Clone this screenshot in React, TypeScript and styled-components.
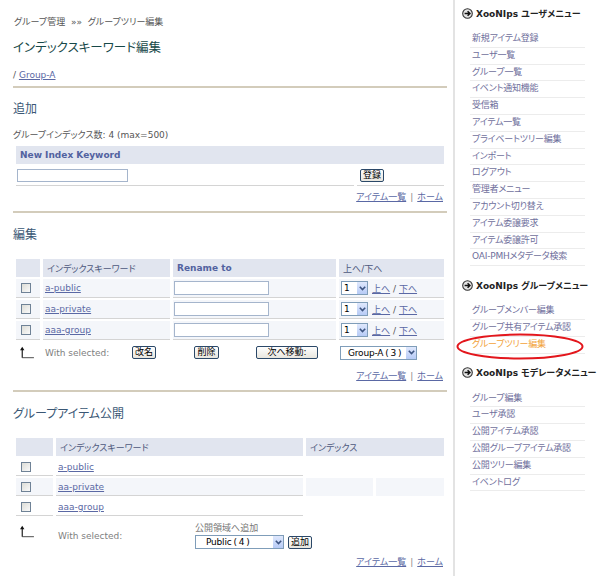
import React from 'react';
import styled, { createGlobalStyle } from 'styled-components';

const FONT = `"DejaVu Sans", "Noto Sans CJK JP", sans-serif`;

const Global = createGlobalStyle`
  html, body { margin: 0; padding: 0; background: #fff; }
  body {
    font-family: ${FONT};
    font-size: 9px;
    color: #555;
    font-feature-settings: "palt";
  }
  * { box-sizing: border-box; }
`;

const Page = styled.div`
  display: flex;
  width: 600px;
  min-height: 576px;
`;

const Main = styled.main`
  width: 453px;
  padding: 15px 6px 0 13px;
`;

const Breadcrumb = styled.div`
  line-height: 14px;
  color: #555;
  padding-left: 1px;
`;

const Title = styled.h1`
  margin: 10px 0 0;
  font-size: 12.5px;
  line-height: 18px;
  font-weight: normal;
  color: #174848;
`;

const PathLine = styled.div`
  margin-top: 11px;
  line-height: 14px;
  color: #555;
`;

const Rule = styled.div<{ mt: number }>`
  height: 2px;
  background: #d3ccbb;
  margin-top: ${p => p.mt}px;
`;

const SectionTitle = styled.h2<{ mt: number }>`
  margin: ${p => p.mt}px 0 0;
  font-size: 12px;
  line-height: 18px;
  font-weight: normal;
  color: #3a5775;
`;

const Note = styled.div`
  margin-top: 10px;
  line-height: 14px;
  color: #555;
`;

const Table = styled.table<{ mt: number }>`
  margin-top: ${p => p.mt}px;
  width: 434px;
  table-layout: fixed;
  border-collapse: separate;
  border-spacing: 3px 2px;
  font-size: 9px;
`;

const Th = styled.th<{ jp?: boolean }>`
  background: #e1e5ef;
  height: 18px;
  padding: 0 4px;
  text-align: left;
  font-weight: ${p => (p.jp ? 'normal' : 'bold')};
  color: ${p => (p.jp ? '#4d587c' : '#5262a0')};
  white-space: nowrap;
  vertical-align: middle;
`;

const Td = styled.td<{ h: number; tint?: boolean; line?: boolean; pl?: number }>`
  height: ${p => p.h}px;
  padding: 0 0 0 ${p => p.pl ?? 0}px;
  background: ${p => (p.tint ? '#f4f6fa' : 'transparent')};
  border-bottom: ${p => (p.line ? '1px solid #d4d4d4' : 'none')};
  vertical-align: middle;
  white-space: nowrap;
`;

const TopTd = styled.td`
  height: 33px;
  padding: 4px 0 0 2px;
  vertical-align: top;
`;

const Cell = styled.div<{ pl?: number; pr?: number; pt?: number }>`
  display: flex;
  align-items: center;
  padding-left: ${p => p.pl ?? 0}px;
  padding-right: ${p => p.pr ?? 0}px;
  padding-top: ${p => p.pt ?? 0}px;
`;

const Link = styled.a`
  color: #5a68a4;
  text-decoration: underline;
  cursor: pointer;
`;

const Grey = styled.span`
  color: #808080;
`;

const Spacer = styled.span`
  flex: 1;
`;

const TextInput = styled.input<{ w: number; h: number }>`
  width: ${p => p.w}px;
  height: ${p => p.h}px;
  border: 1px solid #a5b5cc;
  padding: 0 2px;
  margin: 0;
  font-size: 9px;
  background: #fff;
  display: block;
`;

const Check = styled.input.attrs({ type: 'checkbox' })`
  appearance: none;
  width: 10px;
  height: 10px;
  margin: 0;
  border: 1px solid #6f8296;
  background: linear-gradient(135deg, #dcdcd6, #fafafa);
  display: block;
`;

const Btn = styled.button<{ w: number }>`
  font-family: ${FONT};
  font-size: 9px;
  width: ${p => p.w}px;
  height: 13px;
  padding: 0;
  line-height: 11px;
  border: 1px solid #2b4868;
  border-radius: 2px;
  background: linear-gradient(#fefefe, #e8e6de);
  color: #000;
  cursor: pointer;
  flex: none;
`;

const SelectWrap = styled.span<{ w: number }>`
  display: inline-flex;
  align-items: center;
  width: ${p => p.w}px;
  height: 14px;
  border: 1px solid #7f9db9;
  background: #fff;
  color: #000;
  font-size: 9px;
  flex: none;
`;

const SelectText = styled.span<{ pl: number }>`
  flex: 1;
  min-width: 0;
  padding-left: ${p => p.pl}px;
  line-height: 12px;
  white-space: nowrap;
  letter-spacing: -0.2px;
`;

const Paren = styled.span`
  margin: 0 2px;
`;

const SelectArrow = styled.span`
  width: 11px;
  height: 12px;
  flex: none;
  background: linear-gradient(#dfe8fd, #b7cbf6);
  border-left: 1px solid #fff;
  display: flex;
  align-items: center;
  justify-content: center;
`;

const Links = styled.div<{ mt: number }>`
  margin-top: ${p => p.mt}px;
  line-height: 14px;
  text-align: right;
  padding-right: 4px;
`;

const Sep = styled.span`
  color: #888;
  margin: 0 4px;
`;

const Stack = styled.div`
  display: flex;
  flex-direction: column;
`;

const StackLabel = styled.div`
  line-height: 13px;
  color: #777;
`;

const Row = styled.div<{ gap: number }>`
  display: flex;
  align-items: center;
  gap: ${p => p.gap}px;
`;

const Fixed = styled.div<{ w: number }>`
  width: ${p => p.w}px;
  flex: none;
`;

const MoveLinks = styled.span`
  margin-left: 4px;
  color: #555;
`;

/* Sidebar */
const Sidebar = styled.aside`
  width: 147px;
  border-left: 2px solid #e3e3e3;
  padding: 5px 12px 0 7px;
`;

const MenuHead = styled.div`
  display: flex;
  align-items: center;
  gap: 3px;
  height: 16px;
  font-weight: bold;
  font-size: 9px;
  color: #222;
  white-space: nowrap;
  svg {
    flex: none;
  }
`;

const MenuList = styled.ul`
  list-style: none;
  margin: 10px 3px 11px 8px;
  padding: 0;
`;

const MenuItem = styled.li<{ active?: boolean }>`
  position: relative;
  height: 16.8px;
  line-height: 15.8px;
  padding-left: 2px;
  border-bottom: 1px solid #ececec;
  color: ${p => (p.active ? '#f2a33a' : '#6f6f9c')};
  white-space: nowrap;
  letter-spacing: -0.2px;
`;

const Circle = styled.svg`
  position: absolute;
  left: -14px;
  top: -4px;
  pointer-events: none;
`;

const ArrowIcon = () => (
  <svg width="14" height="13" viewBox="-1 -1 16 15" style={{ overflow: 'visible' }}>
    <line x1="1.5" y1="12.5" x2="1.5" y2="2" stroke="#111" strokeWidth="1.3" />
    <polygon points="1.5,0 4,4 -1,4" fill="#111" />
    <line x1="1.5" y1="12.5" x2="15" y2="12.5" stroke="#333" strokeWidth="1" />
  </svg>
);

const Chevron = () => (
  <svg width="7" height="5" viewBox="0 0 7 5">
    <polyline points="0.8,0.8 3.5,3.6 6.2,0.8" fill="none" stroke="#3e5582" strokeWidth="1.6" />
  </svg>
);

const Select = ({ w, name, count, pl }: { w: number; name: string; count?: number; pl: number }) => (
  <SelectWrap w={w}>
    <SelectText pl={pl}>
      {name}
      {count !== undefined && (
        <>
          <Paren>(</Paren>
          {count}
          <Paren>)</Paren>
        </>
      )}
    </SelectText>
    <SelectArrow>
      <Chevron />
    </SelectArrow>
  </SelectWrap>
);

const MenuIcon = () => (
  <svg width="11" height="11" viewBox="0 0 11 11">
    <circle cx="5.5" cy="5.5" r="4.8" fill="#e4e4e4" stroke="#333" strokeWidth="1.1" />
    <path d="M2.6 5.5 H7.6 M5.6 3.3 L7.9 5.5 L5.6 7.7" fill="none" stroke="#111" strokeWidth="1.5" />
  </svg>
);

const userMenu = [
  '新規アイテム登録',
  'ユーザ一覧',
  'グループ一覧',
  'イベント通知機能',
  '受信箱',
  'アイテム一覧',
  'プライベートツリー編集',
  'インポート',
  'ログアウト',
  '管理者メニュー',
  'アカウント切り替え',
  'アイテム委譲要求',
  'アイテム委譲許可',
  'OAI-PMHメタデータ検索',
];
const groupMenu = ['グループメンバー編集', 'グループ共有アイテム承認', 'グループツリー編集'];
const modMenu = ['グループ編集', 'ユーザ承認', '公開アイテム承認', '公開グループアイテム承認', '公開ツリー編集', 'イベントログ'];

const keywords = ['a-public', 'aa-private', 'aaa-group'];

const FooterLinks = ({ mt }: { mt: number }) => (
  <Links mt={mt}>
    <Link>アイテム一覧</Link>
    <Sep>|</Sep>
    <Link>ホーム</Link>
  </Links>
);

export default function App() {
  return (
    <>
      <Global />
      <Page>
        <Main>
          <Breadcrumb>グループ管理 &nbsp;»» &nbsp;グループツリー編集</Breadcrumb>
          <Title>インデックスキーワード編集</Title>
          <PathLine>
            / <Link>Group-A</Link>
          </PathLine>
          <Rule mt={4} />

          <SectionTitle mt={12}>追加</SectionTitle>
          <Note>グループインデックス数: 4 (max=500)</Note>
          <Table mt={2}>
            <colgroup>
              <col style={{ width: 338 }} />
              <col style={{ width: 87 }} />
            </colgroup>
            <thead>
              <tr>
                <Th colSpan={2}>New Index Keyword</Th>
              </tr>
            </thead>
            <tbody>
              <tr>
                <Td h={20} line pl={1}>
                  <TextInput w={111} h={13} />
                </Td>
                <Td h={20} line>
                  <Cell pl={3}>
                    <Btn w={24}>登録</Btn>
                  </Cell>
                </Td>
              </tr>
            </tbody>
          </Table>
          <FooterLinks mt={2} />
          <Rule mt={7} />

          <SectionTitle mt={13}>編集</SectionTitle>
          <Table mt={13}>
            <colgroup>
              <col style={{ width: 24 }} />
              <col style={{ width: 127 }} />
              <col style={{ width: 163 }} />
              <col style={{ width: 105 }} />
            </colgroup>
            <thead>
              <tr>
                <Th />
                <Th jp>インデックスキーワード</Th>
                <Th>Rename to</Th>
                <Th jp>上へ/下へ</Th>
              </tr>
            </thead>
            <tbody>
              {keywords.map(k => (
                <tr key={k}>
                  <Td h={19} tint line>
                    <Cell pl={5}>
                      <Check />
                    </Cell>
                  </Td>
                  <Td h={19} tint line pl={2}>
                    <Link>{k}</Link>
                  </Td>
                  <Td h={19} tint line pl={1}>
                    <TextInput w={95} h={14} />
                  </Td>
                  <Td h={19} tint line>
                    <Cell pl={2}>
                      <Select w={27} name="1" pl={2} />
                      <MoveLinks>
                        <Link>上へ</Link> / <Link>下へ</Link>
                      </MoveLinks>
                    </Cell>
                  </Td>
                </tr>
              ))}
              <tr>
                <Td h={21}>
                  <Cell pl={4}>
                    <ArrowIcon />
                  </Cell>
                </Td>
                <Td h={21}>
                  <Cell pl={2} pr={14}>
                    <Grey>With selected:</Grey>
                    <Spacer />
                    <Btn w={24}>改名</Btn>
                  </Cell>
                </Td>
                <Td h={21}>
                  <Cell pl={21}>
                    <Btn w={25}>削除</Btn>
                    <Fixed w={37} />
                    <Btn w={62}>次へ移動:</Btn>
                  </Cell>
                </Td>
                <Td h={21}>
                  <Cell pl={1}>
                    <Select w={77} name="Group-A" count={3} pl={7} />
                  </Cell>
                </Td>
              </tr>
            </tbody>
          </Table>
          <FooterLinks mt={4} />
          <Rule mt={7} />

          <SectionTitle mt={13}>グループアイテム公開</SectionTitle>
          <Table mt={13}>
            <colgroup>
              <col style={{ width: 37 }} />
              <col style={{ width: 247 }} />
              <col style={{ width: 67 }} />
              <col style={{ width: 68 }} />
            </colgroup>
            <thead>
              <tr>
                <Th />
                <Th jp>インデックスキーワード</Th>
                <Th jp colSpan={2}>
                  インデックス
                </Th>
              </tr>
            </thead>
            <tbody>
              {keywords.map((k, i) => (
                <tr key={k}>
                  <Td h={18} line tint={i === 1}>
                    <Cell pl={5}>
                      <Check />
                    </Cell>
                  </Td>
                  <Td h={18} line tint={i === 1} pl={2}>
                    <Link>{k}</Link>
                  </Td>
                  {i === 1 && (
                    <>
                      <Td h={18} tint />
                      <Td h={18} tint />
                    </>
                  )}
                </tr>
              ))}
              <tr>
                <TopTd>
                  <Cell pl={2} pt={3}>
                    <ArrowIcon />
                  </Cell>
                </TopTd>
                <TopTd colSpan={3}>
                  <Row gap={0}>
                    <Fixed w={137}>
                      <Grey>With selected:</Grey>
                    </Fixed>
                    <Stack>
                      <StackLabel>公開領域へ追加</StackLabel>
                      <Row gap={4}>
                        <Select w={89} name="Public" count={4} pl={10} />
                        <Btn w={24}>追加</Btn>
                      </Row>
                    </Stack>
                  </Row>
                </TopTd>
              </tr>
            </tbody>
          </Table>
          <FooterLinks mt={2} />
          <Rule mt={7} />
        </Main>

        <Sidebar>
          <MenuHead>
            <MenuIcon />
            XooNIps ユーザメニュー
          </MenuHead>
          <MenuList>
            {userMenu.map(m => (
              <MenuItem key={m}>{m}</MenuItem>
            ))}
          </MenuList>
          <MenuHead>
            <MenuIcon />
            XooNIps グループメニュー
          </MenuHead>
          <MenuList>
            {groupMenu.map((m, i) => (
              <MenuItem key={m} active={i === 2}>
                {m}
                {i === 2 && (
                  <Circle width="128" height="27" viewBox="0 0 128 27">
                    <ellipse cx="64" cy="13.5" rx="62.5" ry="12" fill="none" stroke="#e3161c" strokeWidth="2" />
                  </Circle>
                )}
              </MenuItem>
            ))}
          </MenuList>
          <MenuHead>
            <MenuIcon />
            XooNIps モデレータメニュー
          </MenuHead>
          <MenuList>
            {modMenu.map(m => (
              <MenuItem key={m}>{m}</MenuItem>
            ))}
          </MenuList>
        </Sidebar>
      </Page>
    </>
  );
}
